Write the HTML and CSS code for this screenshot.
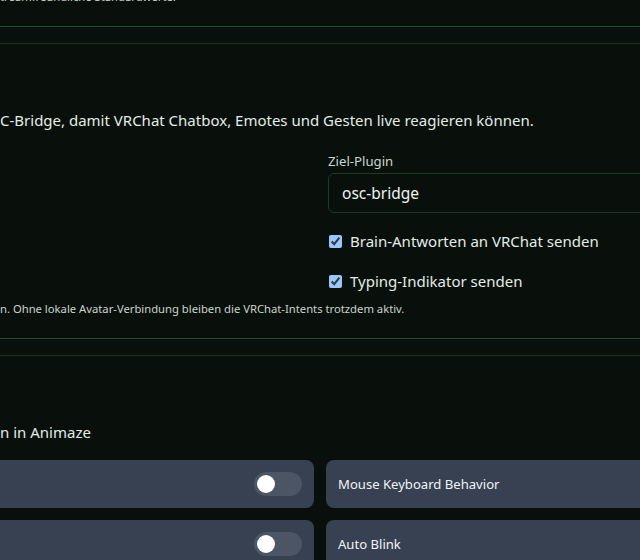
FILE: index.html
```html
<!DOCTYPE html>
<html lang="de">
<head>
  <meta charset="UTF-8">
  <meta name="viewport" content="width=device-width, initial-scale=1.0">
  <title>Einstellungen</title>
  <link rel="stylesheet" href="styles.css">
</head>
<body>
  <main class="settings">
    <section class="panel panel-cut">
      <p class="hint">treamfreundliche Standardwerte.</p>
    </section>

    <section class="panel">
      <div class="panel-head"></div>
      <p class="panel-desc">C-Bridge, damit VRChat Chatbox, Emotes und Gesten live reagieren können.</p>
      <div class="form-grid">
        <div class="form-col"></div>
        <div class="form-col">
          <label class="field">
            <span class="field-label">Ziel-Plugin</span>
            <input class="field-input" type="text" value="osc-bridge">
          </label>
          <label class="check">
            <input type="checkbox" checked>
            <span>Brain-Antworten an VRChat senden</span>
          </label>
          <label class="check">
            <input type="checkbox" checked>
            <span>Typing-Indikator senden</span>
          </label>
        </div>
      </div>
      <p class="hint">n. Ohne lokale Avatar-Verbindung bleiben die VRChat-Intents trotzdem aktiv.</p>
    </section>

    <section class="panel">
      <div class="panel-head"></div>
      <p class="panel-desc">n in Animaze</p>
      <div class="toggle-grid">
        <div class="toggle-card">
          <span></span>
          <span class="switch"><span class="knob"></span></span>
        </div>
        <div class="toggle-card">
          <span>Mouse Keyboard Behavior</span>
        </div>
        <div class="toggle-card">
          <span></span>
          <span class="switch"><span class="knob"></span></span>
        </div>
        <div class="toggle-card">
          <span>Auto Blink</span>
        </div>
      </div>
    </section>
  </main>
</body>
</html>
```

FILE: styles.css
```css
html {
  color-scheme: dark;
}

body {
  margin: 0;
  background: #09100b;
  color: #e3ece6;
  font-family: "Noto Sans", "Open Sans", sans-serif;
  overflow: hidden;
}

.settings {
  display: flex;
  flex-direction: column;
  gap: 16px;
  margin-top: -12px;
}

.panel {
  border-top: 1px solid #1a3322;
  border-bottom: 1px solid #1d4a2b;
  padding: 20px 0;
}

.panel-cut {
  border-top: none;
  padding-top: 0;
}

.panel-head {
  height: 28px;
  margin-bottom: 16px;
}

.panel-desc {
  margin: 0;
  font-size: 15px;
  line-height: 24px;
}

.hint {
  margin: 0;
  font-size: 11.25px;
  line-height: 18px;
  color: #c9d3cc;
}

.form-grid {
  display: grid;
  grid-template-columns: 608px 608px;
  gap: 16px;
  margin: 19px 0 7px -296px;
}

.form-col {
  display: flex;
  flex-direction: column;
  gap: 16px;
}

.field {
  display: flex;
  flex-direction: column;
  gap: 2px;
}

.field-label {
  font-size: 13.2px;
  line-height: 20px;
  color: #cdd6d0;
}

.field-input {
  height: 40px;
  box-sizing: border-box;
  width: 100%;
  padding: 0 13px;
  background: #09100b;
  border: 1px solid #1c3a26;
  border-radius: 6px;
  color: #eef3f0;
  font: inherit;
  font-size: 15.5px;
}

.check {
  display: flex;
  align-items: center;
  gap: 8px;
  font-size: 15px;
  line-height: 24px;
}

.check input {
  margin: 0 0 0 1px;
  width: 13px;
  height: 13px;
}

.toggle-grid {
  display: grid;
  grid-template-columns: 610px 610px;
  gap: 12px;
  margin: 16px 0 0 -296px;
}

.toggle-card {
  display: flex;
  align-items: center;
  justify-content: space-between;
  height: 48px;
  box-sizing: border-box;
  padding: 0 12px;
  background: #374151;
  border-radius: 8px;
  font-size: 13.1px;
  color: #f1f3f6;
}

.switch {
  display: flex;
  align-items: center;
  width: 48px;
  height: 24px;
  padding: 0 3px;
  box-sizing: border-box;
  background: #4b5563;
  border-radius: 12px;
}

.knob {
  width: 18px;
  height: 18px;
  border-radius: 50%;
  background: #fff;
}
```
